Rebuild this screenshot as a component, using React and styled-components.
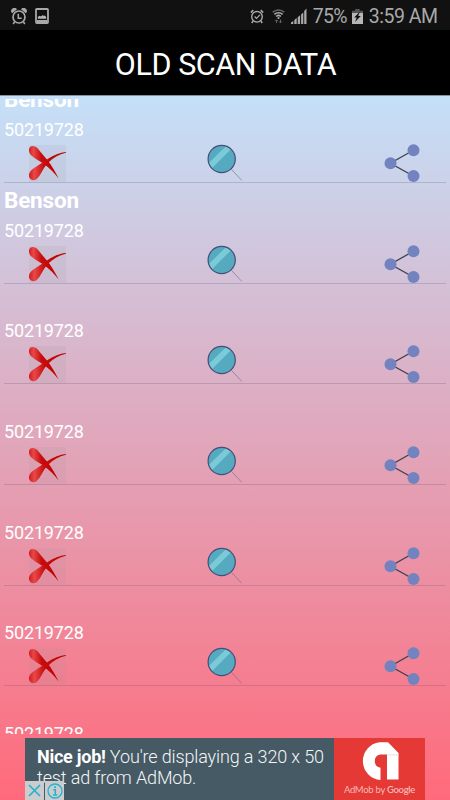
import React from "react";
import styled, { createGlobalStyle } from "styled-components";

const GlobalStyle = createGlobalStyle`
  * {
    box-sizing: border-box;
  }

  body {
    margin: 0;
    font-family: Roboto, "Liberation Sans", sans-serif;
  }
`;

const Screen = styled.div`
  position: relative;
  display: flex;
  flex-direction: column;
  width: 450px;
  height: 800px;
  overflow: hidden;
`;

const StatusBar = styled.div`
  display: flex;
  align-items: center;
  justify-content: space-between;
  flex: none;
  height: 30px;
  padding: 2px 12.5px 0 11px;
  background-color: #111;
  color: #a9a9a9;
`;

const StatusGroup = styled.div`
  display: flex;
  align-items: center;
  gap: ${(props) => props.$gap}px;
`;

const StatusText = styled.span`
  padding-top: 1px;
  font-size: 19.5px;
  line-height: 28px;
  letter-spacing: ${(props) => props.$spacing || 0}px;
  white-space: nowrap;
`;

const Header = styled.h1`
  flex: none;
  height: 66px;
  margin: 0;
  padding: 1px 0 0 1px;
  border-bottom: 1px solid #86919c;
  background-color: #000;
  color: #fff;
  font-size: 30.5px;
  font-weight: 400;
  line-height: 67px;
  letter-spacing: -0.42px;
  text-align: center;
`;

const Content = styled.main`
  flex: 1;
  min-height: 0;
  padding: 3px 4px 0;
  background: linear-gradient(#c4e0f8, #ff6a7b);
`;

const ScanList = styled.ul`
  height: 635px;
  margin: 0;
  padding: 0;
  overflow: hidden;
  list-style: none;
`;

const ScanRow = styled.li`
  height: 100.7px;
  border-bottom: 1px solid rgba(90, 80, 110, 0.24);

  &:first-child {
    margin-top: -16.7px;
  }
`;

const ScanName = styled.div`
  height: 33.6px;
  color: #fff;
  font-size: 22.5px;
  font-weight: 700;
  line-height: 35px;
  letter-spacing: -0.2px;
`;

const ScanCode = styled.div`
  height: 29.1px;
  color: #fff;
  font-size: 18px;
  line-height: 27px;
  letter-spacing: -0.15px;
`;

const Actions = styled.div`
  display: flex;
  justify-content: space-between;
  padding: 0 24.7px 0 25px;
`;

const IconButton = styled.button`
  display: block;
  width: 37px;
  height: 37px;
  padding: 0;
  border: none;
  background-color: ${(props) => (props.$shaded ? "rgba(150, 150, 150, 0.12)" : "transparent")};
  cursor: pointer;

  svg {
    display: block;
    overflow: visible;
  }
`;

const AdBanner = styled.aside`
  position: absolute;
  left: 25px;
  bottom: 0;
  display: flex;
  width: 400px;
  height: 62px;
  background-color: #455a64;
`;

const AdText = styled.p`
  flex: 1;
  margin: 0;
  padding: 8px 0 0 12px;
  color: #f4f6f7;
  font-size: 18px;
  font-weight: 300;
  line-height: 21px;
  letter-spacing: -0.14px;
  white-space: nowrap;

  b {
    font-weight: 700;
    color: #fff;
    letter-spacing: -0.25px;
  }
`;

const AdLogo = styled.div`
  display: flex;
  flex-direction: column;
  align-items: center;
  width: 91px;
  padding-top: 4px;
  background-color: #e53935;
`;

const AdBrand = styled.span`
  margin-top: 2px;
  color: #f7b8b6;
  font-family: Lato, sans-serif;
  font-size: 9.5px;
  line-height: 16px;
  letter-spacing: -0.3px;
  white-space: nowrap;

  b {
    font-weight: 600;
  }
`;

const AdChoices = styled.div`
  position: absolute;
  left: 0;
  bottom: 0;
  display: flex;
  gap: 1px;
`;

const AdChoice = styled.span`
  display: flex;
  align-items: center;
  justify-content: center;
  width: 19px;
  height: 19px;
  background-color: #cbcccd;
`;

function AlarmIcon() {
  return (
    <svg width="16" height="17" viewBox="0 0 16 17" fill="none" stroke="#a9a9a9">
      <circle cx="8" cy="9" r="6" strokeWidth="1.7" />
      <path d="M1.2 4.8a2.8 2.8 0 0 1 4.3-3.6zM14.8 4.8a2.8 2.8 0 0 0-4.3-3.6z" fill="#a9a9a9" strokeWidth="1" />
      <path d="M7.3 5.8v4.5h3.4" strokeWidth="1.5" />
      <path d="M3.5 14l-1.3 2M12.5 14l1.3 2" strokeWidth="1.6" />
    </svg>
  );
}

function PictureIcon() {
  return (
    <svg width="14" height="16" viewBox="0 0 14 16">
      <rect x="1" y="1" width="12" height="14" rx="0.8" fill="none" stroke="#a9a9a9" strokeWidth="1.8" />
      <path d="M2 12h10v3H2z" fill="#a9a9a9" />
      <path d="M2.8 10.8V8.8l2-1 1.2 0.6 1.8-1.4 1 1 1-0.4 1.4 1.4v1.8z" fill="#b5b5b5" />
    </svg>
  );
}

function AlarmSetIcon() {
  return (
    <svg width="14" height="15" viewBox="0 0 14 15" fill="none" stroke="#a9a9a9">
      <circle cx="7" cy="7.8" r="5.3" strokeWidth="1.4" />
      <path d="M0.8 3.6l2.5-2.5M13.2 3.6l-2.5-2.5M3 12l-1.2 2M11 12l1.2 2" strokeWidth="1.5" />
      <path d="M4.6 7.5l1.9 1.9 3.4-3.5" strokeWidth="1.3" />
    </svg>
  );
}

function WifiIcon() {
  return (
    <svg width="13" height="16" viewBox="0 0 13 16" fill="none">
      <path d="M0.7 4.3a8.3 8.3 0 0 1 11.6 0" stroke="#666" strokeWidth="1.6" />
      <path d="M2.4 6.4a6 6 0 0 1 8.2 0M4.2 8.5a3.4 3.4 0 0 1 4.6 0" stroke="#aaa" strokeWidth="1.6" />
      <circle cx="6.5" cy="10" r="1.1" fill="#aaa" />
      <path d="M4.5 15v-3M3.2 13.2l1.3-1.4 1.3 1.4M8.5 11.5v3.2M7.2 13.5l1.3 1.4 1.3-1.4" stroke="#666" />
    </svg>
  );
}

function SignalIcon() {
  return (
    <svg width="16" height="16" viewBox="0 0 16 16" fill="#a9a9a9">
      <path d="M0 16v-1.5l2.3-1.5v3zM3.3 16v-4l2.4-2v6zM6.7 16V9.3l2.4-2V16zM10.1 16V6.5l2.2-2V16zM13.2 16V3L15.5 0.5V16z" />
    </svg>
  );
}

function BatteryIcon() {
  return (
    <svg width="11" height="15" viewBox="0 0 11 15">
      <path d="M3.3 0h4.4v1.7H11V5H0V1.7h3.3z" fill="#555" />
      <path d="M0 4h11v11H0z" fill="#b7b7b7" />
      <path d="M8 2.5L2.2 8.5h2.5L3 13l5.8-6H6.2z" fill="#111" />
    </svg>
  );
}

function DeleteIcon() {
  return (
    <svg width="37" height="37" viewBox="0 0 37 37">
      <defs>
        <linearGradient id="cross" x1="0" y1="0" x2="1" y2="0">
          <stop offset="0" stopColor="#d01c1e" />
          <stop offset="0.15" stopColor="#e84848" />
          <stop offset="0.42" stopColor="#c60d0d" />
          <stop offset="1" stopColor="#be0000" />
        </linearGradient>
      </defs>
      <path
        d="M0 4.5C0.2 1.8 2.6 0.7 5 1.2C8 1.9 9.8 4.6 12 7.6C14.3 10.5 16.5 12.8 18.8 15.4C23 21 26.5 27 29.6 33.5C25 27.8 20.5 23 15.2 19.3C11 16.4 6.2 14 2.4 10.6C0.7 9 -0.2 6.8 0 4.5Z"
        fill="url(#cross)"
      />
      <path
        d="M36.9 6.9C31 7.2 24.5 10 19 13.8C14.2 17.5 8.8 20.5 4.3 23.5C1.3 25.6 -0.5 28.6 0 31.5C0.7 34.8 4.4 36.2 7.2 34.4C10 32.3 11.6 28.8 13.6 25.5C15.3 22.5 17 20 19.4 17.6C24 12.8 30 9.2 36.9 7.8Z"
        fill="url(#cross)"
      />
    </svg>
  );
}

function ViewIcon() {
  return (
    <svg width="37" height="37" viewBox="0.3 0 37 37">
      <defs>
        <clipPath id="lens">
          <circle cx="15" cy="14" r="13.2" />
        </clipPath>
      </defs>
      <path d="M24.7 24.3L35 35.3" stroke="#6d6f8c" strokeOpacity="0.7" strokeWidth="0.9" />
      <circle cx="15" cy="14" r="13.6" fill="#55aac0" />
      <path d="M-1 21L20.5 0L26 2.5L4.5 24Z" fill="#7acbd7" clipPath="url(#lens)" />
      <circle cx="15" cy="14" r="13.6" fill="none" stroke="#474d78" strokeWidth="1.2" />
    </svg>
  );
}

function ShareIcon() {
  return (
    <svg width="37" height="37" viewBox="0 0 37 37">
      <path d="M29.3 5.3L6.4 18.2L29.3 31" fill="none" stroke="#3c404f" strokeWidth="1.3" />
      <g fill="#7383bf">
        <circle cx="29.5" cy="5.3" r="6" />
        <circle cx="6.5" cy="18.2" r="6" />
        <circle cx="29.5" cy="31" r="6" />
      </g>
    </svg>
  );
}

function AdMobIcon() {
  return (
    <svg width="38" height="38" viewBox="0 0 38 38">
      <path
        d="M19.5 38A19 19 0 0 1 18.5 0.2H27L37.5 11V37.5H26V12.5H19.2A6.7 6.7 0 0 0 19.5 25.7Z"
        fill="#fff"
      />
      <path d="M25.8 12.5H37.5V13.3H25.8Z" fill="#d9d9d9" />
    </svg>
  );
}

const scans = [
  { id: 1, name: "Benson", code: "50219728" },
  { id: 2, name: "Benson", code: "50219728" },
  { id: 3, name: "", code: "50219728" },
  { id: 4, name: "", code: "50219728" },
  { id: 5, name: "", code: "50219728" },
  { id: 6, name: "", code: "50219728" },
  { id: 7, name: "", code: "50219728" },
];

function App() {
  return (
    <Screen>
      <GlobalStyle />
      <StatusBar>
        <StatusGroup $gap={7.5}>
          <AlarmIcon />
          <PictureIcon />
        </StatusGroup>
        <StatusGroup $gap={6}>
          <StatusGroup $gap={8}>
            <AlarmSetIcon />
            <WifiIcon />
          </StatusGroup>
          <SignalIcon />
          <StatusGroup $gap={5}>
            <StatusText $spacing={-0.7}>75%</StatusText>
            <BatteryIcon />
          </StatusGroup>
          <StatusText $spacing={-0.5}>3:59 AM</StatusText>
        </StatusGroup>
      </StatusBar>
      <Header>OLD SCAN DATA</Header>
      <Content>
        <ScanList>
          {scans.map((scan) => (
            <ScanRow key={scan.id}>
              <ScanName>{scan.name}</ScanName>
              <ScanCode>{scan.code}</ScanCode>
              <Actions>
                <IconButton $shaded>
                  <DeleteIcon />
                </IconButton>
                <IconButton>
                  <ViewIcon />
                </IconButton>
                <IconButton>
                  <ShareIcon />
                </IconButton>
              </Actions>
            </ScanRow>
          ))}
        </ScanList>
      </Content>
      <AdBanner>
        <AdText>
          <b>Nice job!</b> You're displaying a 320 x 50
          <br />
          test ad from AdMob.
        </AdText>
        <AdLogo>
          <AdMobIcon />
          <AdBrand>
            AdMob by <b>Google</b>
          </AdBrand>
        </AdLogo>
        <AdChoices>
          <AdChoice>
            <svg width="13" height="13" viewBox="0 0 13 13" stroke="#25b1ce" strokeWidth="1.6">
              <path d="M1 1L12 12M12 1L1 12" />
            </svg>
          </AdChoice>
          <AdChoice>
            <svg width="16" height="16" viewBox="0 0 16 16" fill="none" stroke="#25b1ce">
              <circle cx="8" cy="8" r="7" strokeWidth="1.3" />
              <path d="M6.3 6.7H8.3V12M6 12H10.3" strokeWidth="1.5" />
              <path d="M8 3.3V5" strokeWidth="1.8" />
            </svg>
          </AdChoice>
        </AdChoices>
      </AdBanner>
    </Screen>
  );
}

export default App;
